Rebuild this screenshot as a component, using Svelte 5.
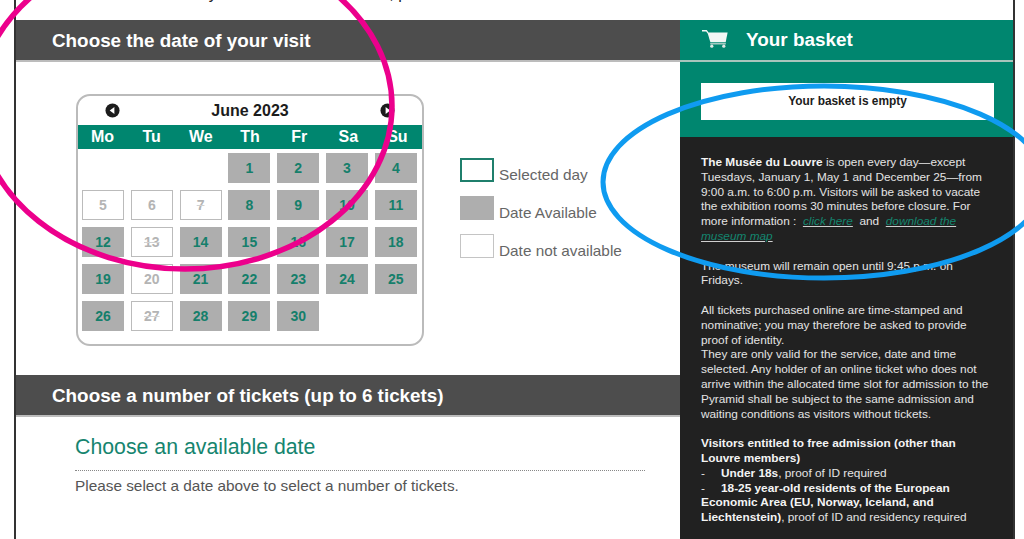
<script>
  const unavailable = [5, 6, 7, 13, 20, 27];
  const struck = [7, 13, 27];
  const days = [];
  for (let i = 0; i < 3; i++) days.push({ n: "", kind: "empty" });
  for (let d = 1; d <= 30; d++) {
    let kind = unavailable.includes(d) ? "off" : "on";
    if (struck.includes(d)) kind += " struck";
    days.push({ n: d, kind });
  }
  const weekdays = ["Mo", "Tu", "We", "Th", "Fr", "Sa", "Su"];
</script>

<div class="page">
  <div class="topline"><span>Tickets may be reserved online here, please</span></div>

  <div class="columns">
    <main class="left">
      <h2 class="bar">Choose the date of your visit</h2>

      <div class="dates">
        <div class="calendar">
          <div class="month">
            <svg class="nav" viewBox="0 0 16 16"><circle cx="8" cy="8" r="7.5" fill="#1c1c1c" /><path d="M10 4.2v7.6L5 8z" fill="#fff" /></svg>
            <strong>June 2023</strong>
            <svg class="nav" viewBox="0 0 16 16"><circle cx="8" cy="8" r="7.5" fill="#1c1c1c" /><path d="M6 4.2v7.6L11 8z" fill="#fff" /></svg>
          </div>
          <div class="weekdays">
            {#each weekdays as w}
              <span>{w}</span>
            {/each}
          </div>
          <div class="grid">
            {#each days as d}
              <div class="day {d.kind}">{d.n}</div>
            {/each}
          </div>
        </div>

        <ul class="legend">
          <li><i class="box selected"></i><span>Selected day</span></li>
          <li><i class="box available"></i><span>Date Available</span></li>
          <li><i class="box none"></i><span>Date not available</span></li>
        </ul>
      </div>

      <h2 class="bar">Choose a number of tickets (up to 6 tickets)</h2>

      <div class="tickets">
        <h3>Choose an available date</h3>
        <p>Please select a date above to select a number of tickets.</p>
      </div>
    </main>

    <aside class="right">
      <div class="basket-head">
        <svg class="cart" viewBox="0 0 26 18">
          <path d="M0 .7h4.4l1.6 2.2" fill="none" stroke="#f2f7f5" stroke-width="1.4" />
          <path d="M5.4 2.4h20.2l-1.9 9.8H8.4z" fill="#f2f7f5" />
          <path d="M8.2 13.2h15.6v1.2H8.2z" fill="#cfdcd7" />
          <circle cx="9.8" cy="16.2" r="1.6" fill="#dfe8e4" />
          <circle cx="21.8" cy="16.2" r="1.6" fill="#dfe8e4" />
        </svg>
        <span>Your basket</span>
      </div>
      <div class="basket-body">
        <div class="empty">Your basket is empty</div>
      </div>
      <div class="info">
        <p><b>The Musée du Louvre</b> is open every day—except Tuesdays, January 1, May 1 and December 25—from 9:00 a.m. to 6:00 p.m. Visitors will be asked to vacate the exhibition rooms 30 minutes before closure. For more information : &nbsp;<a href="#top">click here</a> &nbsp;and &nbsp;<a href="#top">download the museum map</a></p>
        <p>The museum will remain open until 9:45 p.m. on Fridays.</p>
        <p>All tickets purchased online are time-stamped and nominative; you may therefore be asked to provide proof of identity.<br />They are only valid for the service, date and time selected. Any holder of an online ticket who does not arrive within the allocated time slot for admission to the Pyramid shall be subject to the same admission and waiting conditions as visitors without tickets.</p>
        <p><b>Visitors entitled to free admission (other than Louvre members)</b><br /><span class="dash">-</span><b>Under 18s</b>, proof of ID required<br /><span class="dash">-</span><b>18-25 year-old residents of the European Economic Area (EU, Norway, Iceland, and Liechtenstein)</b>, proof of ID and residency required</p>
      </div>
    </aside>
  </div>

  <!-- hand drawn marks on top of the screenshot -->
  <svg class="marks" viewBox="0 0 1024 539">
    <ellipse cx="185" cy="106" rx="207" ry="163" fill="none" stroke="#ec008c" stroke-width="5.5" />
    <ellipse cx="824" cy="182" rx="221" ry="96" fill="none" stroke="#0f9bf0" stroke-width="5" />
  </svg>
</div>

<style>
  :global(body) {
    margin: 0;
    background: #fff;
  }
  .page {
    position: relative;
    width: 1024px;
    height: 539px;
    overflow: hidden;
    font-family: "Liberation Sans", Arial, sans-serif;
    color: #555;
  }
  .topline {
    height: 20px;
    margin: 0 9px 0 14px;
    padding-left: 116px;
    border-left: 2px solid #333;
    border-right: 2px solid #333;
    overflow: hidden;
    color: #222;
    font-size: 16px;
    line-height: 16px;
  }
  .topline span {
    display: block;
    margin-top: -14px;
  }
  .columns {
    display: flex;
    height: 519px;
    margin: 0 9px 0 14px;
    border-left: 2px solid #333;
    border-right: 2px solid #333;
  }
  .left {
    width: 664px;
    flex: none;
  }
  .bar {
    height: 40px;
    margin: 0;
    padding-left: 36px;
    background: #4d4d4d;
    border-bottom: 2px solid #bcbcbc;
    color: #fff;
    font-size: 18.85px;
    line-height: 41px;
  }
  .dates {
    display: flex;
    height: 313px;
    padding: 32px 0 0 60px;
    box-sizing: border-box;
  }
  .calendar {
    width: 348px;
    height: 252px;
    box-sizing: border-box;
    border: 2px solid #bbb;
    border-radius: 14px;
  }
  .month {
    display: flex;
    justify-content: space-between;
    align-items: center;
    height: 29px;
    padding: 0 27px 0 27px;
    color: #1c1c1c;
    font-size: 16px;
  }
  .nav {
    width: 15px;
    height: 15px;
  }
  .weekdays {
    display: grid;
    grid-template-columns: repeat(7, 1fr);
    height: 24px;
    background: #00866f;
    color: #fff;
    font-size: 16px;
    font-weight: bold;
    line-height: 24px;
    text-align: center;
  }
  .grid {
    display: grid;
    grid-template-columns: repeat(7, 42px);
    grid-auto-rows: 30px;
    column-gap: 6.8px;
    row-gap: 7px;
    margin: 4px 0 0 4px;
  }
  .day {
    box-sizing: border-box;
    font-size: 14px;
    font-weight: bold;
    line-height: 30px;
    text-align: center;
  }
  .day.on {
    background: #aeaeae;
    color: #157f6b;
  }
  .day.off {
    border: 1px solid #bbb;
    color: #b4b4b4;
    line-height: 28px;
  }
  .day.struck {
    text-decoration: line-through;
    text-decoration-color: #d2d2d2;
    text-decoration-thickness: 1px;
  }
  .legend {
    margin: 64px 0 0 36px;
    padding: 0;
    list-style: none;
    font-size: 15.35px;
    color: #666;
  }
  .legend li {
    display: flex;
    align-items: flex-end;
    gap: 5px;
    height: 24px;
    margin-bottom: 14px;
  }
  .legend span {
    line-height: 16px;
    margin-bottom: -1px;
  }
  .box {
    display: block;
    box-sizing: border-box;
    width: 34px;
    height: 24px;
  }
  .box.selected {
    border: 2px solid #1f7f6c;
  }
  .box.available {
    background: #aeaeae;
  }
  .box.none {
    border: 1px solid #c4c4c4;
  }
  .tickets {
    padding: 18px 35px 0 59px;
  }
  .tickets h3 {
    margin: 0;
    padding-bottom: 10px;
    border-bottom: 1px dotted #888;
    color: #16856f;
    font-size: 21.3px;
    font-weight: normal;
    line-height: 25px;
  }
  .tickets p {
    margin: 6px 0 0;
    font-size: 15.35px;
    line-height: 18px;
  }
  .right {
    flex: 1;
    display: flex;
    flex-direction: column;
    min-width: 0;
  }
  .basket-head {
    flex: none;
    display: flex;
    align-items: center;
    height: 40px;
    padding-left: 22px;
    background: #00866f;
    border-bottom: 2px solid #a9c4bc;
    color: #fff;
    font-size: 18.9px;
    font-weight: bold;
  }
  .cart {
    width: 26px;
    height: 18px;
    margin: -3px 18px 0 0;
  }
  .basket-body {
    flex: none;
    padding: 21px 19px 17px 21px;
    background: #00866f;
  }
  .empty {
    height: 37px;
    background: #fff;
    color: #1c1c1c;
    font-size: 11.9px;
    font-weight: bold;
    line-height: 36px;
    text-align: center;
  }
  .info {
    flex: 1;
    min-height: 0;
    padding: 18px 19px 0 21px;
    background: #212121;
    color: #e4e4e4;
    font-size: 11.83px;
    line-height: 14.8px;
  }
  .info p {
    margin: 0 0 14.8px;
  }
  .info b {
    color: #f4f4f4;
  }
  .info a {
    color: #14856f;
    font-style: italic;
    text-decoration-color: #cfcfcf;
  }
  .dash {
    display: inline-block;
    width: 20px;
  }
  .marks {
    position: absolute;
    top: 0;
    left: 0;
    width: 1024px;
    height: 539px;
    pointer-events: none;
  }
</style>
